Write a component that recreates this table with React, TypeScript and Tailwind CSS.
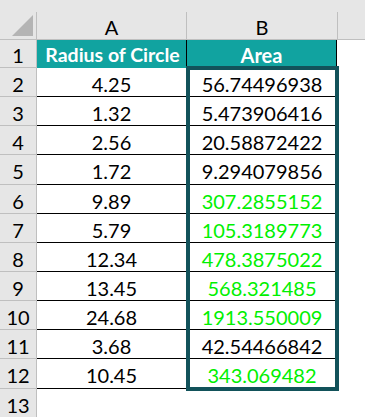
const rows: { r: string; a: string; b: string; green: boolean; h: string }[] = [
  { r: '2', a: '4.25', b: '56.74496938', green: false, h: 'h-[29px]' },
  { r: '3', a: '1.32', b: '5.473906416', green: false, h: 'h-[29px]' },
  { r: '4', a: '2.56', b: '20.58872422', green: false, h: 'h-[29px]' },
  { r: '5', a: '1.72', b: '9.294079856', green: false, h: 'h-[30px]' },
  { r: '6', a: '9.89', b: '307.2855152', green: true, h: 'h-[29px]' },
  { r: '7', a: '5.79', b: '105.3189773', green: true, h: 'h-[29px]' },
  { r: '8', a: '12.34', b: '478.3875022', green: true, h: 'h-[29px]' },
  { r: '9', a: '13.45', b: '568.321485', green: true, h: 'h-[29px]' },
  { r: '10', a: '24.68', b: '1913.550009', green: true, h: 'h-[29px]' },
  { r: '11', a: '3.68', b: '42.54466842', green: false, h: 'h-[29px]' },
  { r: '12', a: '10.45', b: '343.069482', green: true, h: 'h-[30px]' },
]

export default function App() {
  return (
    <div className="relative w-[365px] h-[417px] overflow-hidden bg-white font-['Lato','Liberation_Sans',sans-serif] text-[20px] text-black">
      {/* Column headers */}
      <div className="flex h-[40px] bg-[#e6e6e6] border-b border-[#bfbfbf]">
        <div className="w-[37px] shrink-0 pt-[12px]">
          <div className="h-full border-r border-[#bfbfbf] flex items-end justify-end pr-[3px] pb-[3px]">
            <svg width="21" height="21" viewBox="0 0 21 21">
              <polygon points="21,0 21,21 0,21" fill="#b4b4b4" />
            </svg>
          </div>
        </div>
        <div className="w-[150px] shrink-0 pt-[12px]">
          <div className="h-full border-r border-[#bfbfbf] flex items-end justify-center pb-[2px] leading-none">
            A
          </div>
        </div>
        <div className="w-[151px] shrink-0 pt-[12px]">
          <div className="h-full border-r border-[#bfbfbf] flex items-end justify-center pb-[2px] leading-none">
            B
          </div>
        </div>
        <div className="flex-1" />
      </div>

      {/* Row 1 */}
      <div className="flex h-[28px]">
        <div className="w-[37px] shrink-0 bg-[#e6e6e6] border-r border-b border-[#bfbfbf] flex items-center justify-center pt-[2px]">
          1
        </div>
        <div className="w-[150px] shrink-0 bg-[#11a3a0] border-r border-black flex items-center justify-center pt-[1px] pl-[2px] font-bold text-white text-[19.5px]">
          Radius of Circle
        </div>
        <div className="w-[150px] shrink-0 bg-[#11a3a0] border-r border-black flex items-center justify-center pt-[1px] font-bold text-white">
          Area
        </div>
        <div className="flex-1" />
      </div>

      {/* Data rows */}
      {rows.map((row) => (
        <div key={row.r} className={`flex ${row.h}`}>
          <div className="w-[37px] shrink-0 bg-[#e6e6e6] border-r border-b border-[#bfbfbf] flex items-center justify-center pt-[3px]">
            {row.r}
          </div>
          <div className="w-[150px] shrink-0 border-b border-r border-black flex items-center justify-center pt-[3px]">
            {row.a}
          </div>
          <div
            className={`w-[150px] shrink-0 border-b border-black flex items-center justify-center pt-[3px] ${
              row.green ? 'text-[#00f000]' : 'text-black'
            }`}
          >
            {row.b}
          </div>
          <div className="flex-1" />
        </div>
      ))}

      {/* Row 13 */}
      <div className="flex h-[28px]">
        <div className="w-[37px] shrink-0 bg-[#e6e6e6] border-r border-[#bfbfbf] flex items-center justify-center pt-[3px]">
          13
        </div>
        <div className="flex-1" />
      </div>

      {/* Thick outline around B2:B12 */}
      <div className="absolute left-[186px] top-[66px] w-[153px] h-[325px] border-4 border-[#12525a] pointer-events-none" />
    </div>
  )
}
